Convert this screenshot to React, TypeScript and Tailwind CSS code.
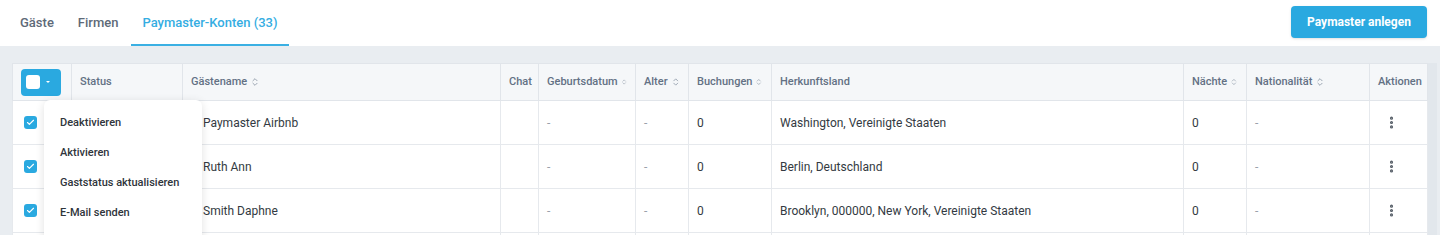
import { ChevronsUpDown, EllipsisVertical, Check } from "lucide-react";
import clsx from "clsx";

const COLUMNS: { label: string; width: string; sortable?: boolean }[] = [
  { label: "", width: "w-[59px]" },
  { label: "Status", width: "w-[111px]" },
  { label: "Gästename", width: "w-[318px]", sortable: true },
  { label: "Chat", width: "w-[38px]" },
  { label: "Geburtsdatum", width: "w-[97px]", sortable: true },
  { label: "Alter", width: "w-[53px]", sortable: true },
  { label: "Buchungen", width: "w-[83px]", sortable: true },
  { label: "Herkunftsland", width: "w-[412px]" },
  { label: "Nächte", width: "w-[63px]", sortable: true },
  { label: "Nationalität", width: "w-[123px]", sortable: true },
  { label: "Aktionen", width: "w-[58px]" },
];

const ROWS = [
  { name: "Paymaster Airbnb", country: "Washington, Vereinigte Staaten" },
  { name: "Ruth Ann", country: "Berlin, Deutschland" },
  { name: "Smith Daphne", country: "Brooklyn, 000000, New York, Vereinigte Staaten" },
];

const MENU = ["Deaktivieren", "Aktivieren", "Gaststatus aktualisieren", "E-Mail senden"];

export default function App() {
  return (
    <div className="relative h-[235px] overflow-hidden bg-[#e9edf1] font-['Roboto',sans-serif]">
      {/* Tabs + action */}
      <div className="flex h-[46px] items-center justify-between bg-white pl-5 pr-[13px]">
        <div className="flex h-full items-stretch text-[13px] font-medium">
          <div className="flex items-center pr-[24px] text-[#5e6a78]">Gäste</div>
          <div className="flex items-center pr-[13px] text-[#5e6a78]">Firmen</div>
          <div className="flex items-center border-b-2 border-[#3bb0e3] px-[11px] pt-[2px] text-[#35ade2]">
            Paymaster-Konten (33)
          </div>
        </div>
        <button className="mt-[-3px] h-[32px] w-[136px] rounded-[4px] bg-[#2aa9e0] text-[12px] font-bold text-white shadow-sm">
          Paymaster anlegen
        </button>
      </div>

      {/* Table */}
      <div className="flex pl-3 pt-[17px]">
        <table className="w-[1415px] table-fixed border-collapse bg-white text-[12px] text-[#333a42]">
          <thead>
            <tr className="h-[37px] bg-[#f5f7f9]">
              {COLUMNS.map((col, i) => (
                <th
                  key={i}
                  className={clsx(
                    "border border-[#e1e5ea] px-2 text-left text-[11px] font-medium text-[#637184]",
                    col.width
                  )}
                >
                  {i === 0 ? (
                    <div className="flex h-[27px] w-[40px] items-center gap-[6px] rounded-[4px] bg-[#2aa9e0] pl-[5px]">
                      <span className="h-[14px] w-[14px] rounded-[3px] bg-white" />
                      <span className="h-0 w-0 border-x-[2px] border-t-[2px] border-x-transparent border-t-white" />
                    </div>
                  ) : (
                    <span className="flex items-center gap-[3px] whitespace-nowrap">
                      {col.label}
                      {col.sortable && <ChevronsUpDown className="h-[10px] w-[10px] text-[#8a96a4]" strokeWidth={2} />}
                    </span>
                  )}
                </th>
              ))}
            </tr>
          </thead>
          <tbody>
            {ROWS.map((row) => (
              <tr key={row.name} className="h-[44px]">
                <td className="border border-[#e6e9ed] pl-[11px]">
                  <span className="flex h-[13px] w-[13px] items-center justify-center rounded-[3px] bg-[#2aa9e0]">
                    <Check className="h-[9px] w-[9px] text-white" strokeWidth={3} />
                  </span>
                </td>
                <td className="border border-[#e6e9ed]" />
                <td className="border border-[#e6e9ed] pl-5">{row.name}</td>
                <td className="border border-[#e6e9ed]" />
                <td className="border border-[#e6e9ed] px-2 text-[#9aa2ab]">-</td>
                <td className="border border-[#e6e9ed] px-2 text-[#9aa2ab]">-</td>
                <td className="border border-[#e6e9ed] px-2">0</td>
                <td className="border border-[#e6e9ed] px-2">{row.country}</td>
                <td className="border border-[#e6e9ed] px-2">0</td>
                <td className="border border-[#e6e9ed] px-2 text-[#9aa2ab]">-</td>
                <td className="border border-[#e6e9ed] pl-[14px]">
                  <EllipsisVertical className="h-[15px] w-[15px] text-[#555d66]" strokeWidth={3} />
                </td>
              </tr>
            ))}
            <tr className="h-[10px]">
              {COLUMNS.map((col, i) => (
                <td key={i} className="border border-[#e6e9ed]" />
              ))}
            </tr>
          </tbody>
        </table>
        <div className="w-[9px] bg-[#e2e7ec]" />
      </div>

      {/* Bulk action menu */}
      <div className="absolute left-[44px] top-[100px] w-[158px] rounded-[6px] bg-white pb-6 pt-[8px] shadow-[0_2px_10px_rgba(0,0,0,0.12)]">
        {MENU.map((item) => (
          <div
            key={item}
            className="flex h-[30px] items-center whitespace-nowrap px-4 text-[11px] font-medium text-[#2f353b]"
          >
            {item}
          </div>
        ))}
      </div>
    </div>
  );
}
